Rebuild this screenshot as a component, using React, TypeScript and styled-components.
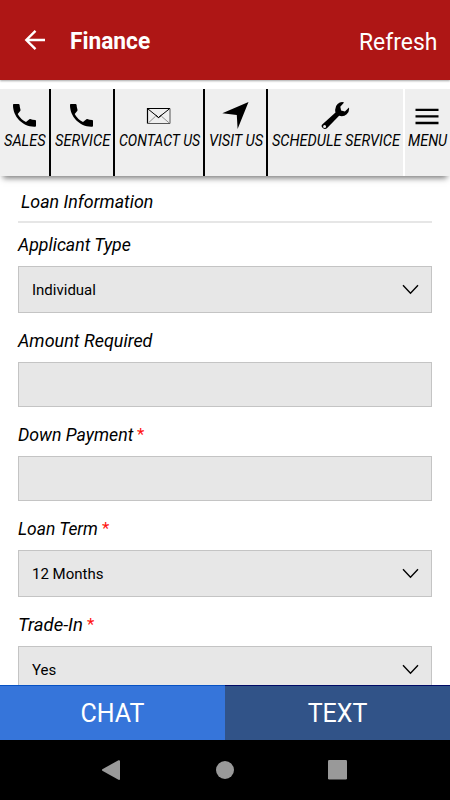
import React, { useLayoutEffect, useRef, useState } from "react";
import styled, { createGlobalStyle } from "styled-components";

const GlobalStyle = createGlobalStyle`
  * { box-sizing: border-box; }
  body { margin: 0; background: #fff; font-family: Roboto, "Liberation Sans", sans-serif; color: #000; }
  button { font: inherit; border: 0; padding: 0; margin: 0; color: inherit; }
`;

const Screen = styled.div`
  width: 450px;
  height: 800px;
  display: flex;
  flex-direction: column;
  overflow: hidden;
  background: #fff;
`;

const Header = styled.header`
  flex: none;
  height: 80px;
  padding: 4px 13px 0 23px;
  display: flex;
  align-items: center;
  background: #ae1615;
  color: #fff;
  box-shadow: 0 1px 2px rgba(0, 0, 0, 0.35);
  svg { flex: none; margin-top: -4px; }
`;

const Title = styled.h1`
  margin: 0 auto 0 23px;
  font-size: 23px;
  line-height: 30px;
  font-weight: 700;
`;

const Refresh = styled.button`
  background: none;
  font-size: 23.5px;
  line-height: 30px;
`;

const Toolbar = styled.nav`
  flex: none;
  height: 87px;
  margin-top: 9px;
  display: grid;
  grid-template-columns: 51px 64px 90px 63px 137px 45px;
  background: #efefef;
  box-shadow: 0 5px 6px -3px rgba(0, 0, 0, 0.55);
`;

const Tool = styled.button<{ $line?: string }>`
  display: flex;
  flex-direction: column;
  align-items: center;
  min-width: 0;
  overflow: hidden;
  background: none;
  border-right: ${(p) => (p.$line ? `2px solid ${p.$line}` : "0")};
`;

const IconBox = styled.span`
  height: 41px;
  padding: 12px 1px 0 0;
  flex: none;
  svg { display: block; }
`;

const FitBox = styled.span<{ $width: number }>`
  display: block;
  width: ${(p) => p.$width}px;
  flex: none;
  white-space: nowrap;
`;

const FitInner = styled.span`
  display: inline-block;
  transform-origin: 0 50%;
`;

const ToolText = styled.span`
  font-size: 17px;
  line-height: 21px;
  font-style: italic;
`;

const Form = styled.main`
  flex: 1;
  min-height: 0;
  overflow: hidden;
  padding: 13px 18px 0;
`;

const Section = styled.h2`
  margin: 0 0 10px;
  height: 34px;
  padding: 1px 0 0 3px;
  font-size: 18.5px;
  line-height: 24px;
  font-weight: 400;
  font-style: italic;
  border-bottom: 2px solid #e6e6e6;
`;

const Field = styled.div<{ $height: number }>`
  height: ${(p) => p.$height}px;
`;

const Label = styled.label`
  display: flex;
  height: 33px;
  font-size: 18.5px;
  line-height: 24px;
  font-style: italic;
`;

const Required = styled.span`
  margin-left: 4px;
  color: #f11;
  font-size: 17px;
  line-height: 22px;
  font-style: normal;
`;

const Control = styled.div<{ $height: number }>`
  height: ${(p) => p.$height}px;
  padding: 0 12px 0 13px;
  display: flex;
  align-items: center;
  justify-content: space-between;
  background: #e7e7e7;
  border: 1px solid #c4c4c4;
  font-size: 15px;
  line-height: 20px;
`;

const Actions = styled.div`
  flex: none;
  height: 55px;
  display: grid;
  grid-template-columns: 1fr 1fr;
`;

const Action = styled.button<{ $bg: string; $edge: string }>`
  background: ${(p) => p.$bg};
  border-top: 1px solid ${(p) => p.$edge};
  color: #fff;
  font-size: 25px;
  display: flex;
  align-items: center;
  justify-content: center;
`;

const SystemBar = styled.footer`
  flex: none;
  height: 60px;
  padding: 0 103px 0 102px;
  display: flex;
  align-items: center;
  justify-content: space-between;
  background: #000;
`;

function FitText({ width, children }: { width: number; children: string }) {
  const ref = useRef<HTMLSpanElement>(null);
  const [scale, setScale] = useState(1);
  useLayoutEffect(() => {
    if (ref.current) setScale(width / ref.current.offsetWidth);
  }, [width]);
  return (
    <FitBox $width={width}>
      <FitInner ref={ref} style={{ transform: `scaleX(${scale})` }}>{children}</FitInner>
    </FitBox>
  );
}

const Phone = () => (
  <svg width="25" height="29" viewBox="0 0 25 29">
    <path transform="translate(1 3)" d="M0 .8Q0 0 .9 0H5.6Q6.4 0 6.6.9Q6.7 3.4 7.5 5.7Q7.7 6.3 7.2 6.9L4.7 10.1Q7.4 15.3 13 18.1L16.1 15.4Q16.6 14.9 17.2 15.1Q19.6 15.9 22.2 16Q23 16.1 23 16.9V21.7Q23 22.7 22.1 22.7C10 23.2-.2 13 0 .8Z" />
  </svg>
);

const Envelope = () => (
  <svg width="25" height="29" viewBox="0 0 25 29" fill="none" stroke="#000">
    <path d="M1.5 22.5V7.5H24" strokeWidth="1.2" />
    <path d="M24 7.5v15H1.5" stroke="#555" />
    <path d="M1.8 7.8 12.5 16.5 23.5 7.8M9.8 14.2 12.5 16.6 15.5 14.2" strokeWidth="1" />
    <path d="m2.5 21.8 7-6.5m6 0 7.5 6.5" stroke="#666" strokeWidth=".7" />
  </svg>
);

const Arrow = () => (
  <svg width="27" height="29" viewBox="0 0 27 29">
    <path d="M26.5 1 15.6 28 14.8 14 .3 12.2Z" />
  </svg>
);

const Wrench = () => (
  <svg width="29" height="29" viewBox="0 0 29 29">
    <path fillRule="evenodd" d="M1.5 23.2 14.5 11.5Q13.2 6 16.6 3Q19.5.4 23.1 1.4L19.3 5.8L20.1 9.5L23.9 10.6L28 6.6Q28.6 10.6 25.7 13.3Q22.7 16 18.1 14.8L6.2 27.1Q4 29 1.8 27.1Q-.5 25 1.5 23.2ZM3.6 24A1.5 1.5 0 1 0 3.6 27A1.5 1.5 0 1 0 3.6 24Z" />
  </svg>
);

const Menu = () => (
  <svg width="24" height="29" viewBox="0 0 24 29" stroke="#000" strokeWidth="2.3">
    <path d="M.5 8.8h23M.5 15.4h23M.5 22h23" />
  </svg>
);

const Chevron = () => (
  <svg width="17" height="11" viewBox="0 0 17 11" fill="none" stroke="#000" strokeWidth="1.4">
    <path d="m1 1.3 7.5 7.9L16 1.3" />
  </svg>
);

const tools = [
  { text: "SALES", width: 42, line: "#000", Icon: Phone },
  { text: "SERVICE", width: 55, line: "#000", Icon: Phone },
  { text: "CONTACT US", width: 81, line: "#000", Icon: Envelope },
  { text: "VISIT US", width: 54, line: "#000", Icon: Arrow },
  { text: "SCHEDULE SERVICE", width: 128, line: "#fff", Icon: Wrench },
  { text: "MENU", width: 39, line: undefined, Icon: Menu },
];

const fields = [
  { label: "Applicant Type", width: 113, value: "Individual", select: true, valueWidth: 64 },
  { label: "Amount Required", width: 134, value: "" },
  { label: "Down Payment", width: 115, value: "", required: true },
  { label: "Loan Term", width: 80, value: "12 Months", select: true, required: true, valueWidth: 71 },
  { label: "Trade-In", width: 65, value: "Yes", select: true, required: true, valueWidth: 24 },
];

export default function App() {
  return (
    <>
      <GlobalStyle />
      <Screen>
        <Header>
          <svg width="24" height="22" viewBox="0 0 24 22" fill="none" stroke="#fff" strokeWidth="2.4">
            <path d="M22 11H4M12.5 1.8 3.3 11l9.2 9.2" />
          </svg>
          <Title><FitText width={80}>Finance</FitText></Title>
          <Refresh><FitText width={78}>Refresh</FitText></Refresh>
        </Header>
        <Toolbar>
          {tools.map(({ text, width, line, Icon }) => (
            <Tool key={text} $line={line}>
              <IconBox><Icon /></IconBox>
              <ToolText><FitText width={width}>{text}</FitText></ToolText>
            </Tool>
          ))}
        </Toolbar>
        <Form>
          <Section><FitText width={132}>Loan Information</FitText></Section>
          {fields.map((f) => (
            <Field key={f.label} $height={f.select ? 96 : 94}>
              <Label>
                <FitText width={f.width}>{f.label}</FitText>
                {f.required && <Required>*</Required>}
              </Label>
              <Control $height={f.select ? 47 : 45}>
                {f.select && (
                  <>
                    <FitText width={f.valueWidth ?? 0}>{f.value}</FitText>
                    <Chevron />
                  </>
                )}
              </Control>
            </Field>
          ))}
        </Form>
        <Actions>
          <Action $bg="#3675da" $edge="#0752c4"><FitText width={64}>CHAT</FitText></Action>
          <Action $bg="#315388" $edge="#000b66"><FitText width={60}>TEXT</FitText></Action>
        </Actions>
        <SystemBar>
          <svg width="19" height="20" viewBox="0 0 19 20" fill="#999"><path d="M.3 9.3 16.5.2Q18 0 18 1v18Q18 20.2 16.5 19.8L.3 10.7Q-.4 10 .3 9.3Z" /></svg>
          <svg width="18" height="18" viewBox="0 0 18 18" fill="#999"><circle cx="9" cy="9" r="9" /></svg>
          <svg width="19" height="20" viewBox="0 0 19 20" fill="#999"><rect width="19" height="19.5" rx="1.2" /></svg>
        </SystemBar>
      </Screen>
    </>
  );
}
